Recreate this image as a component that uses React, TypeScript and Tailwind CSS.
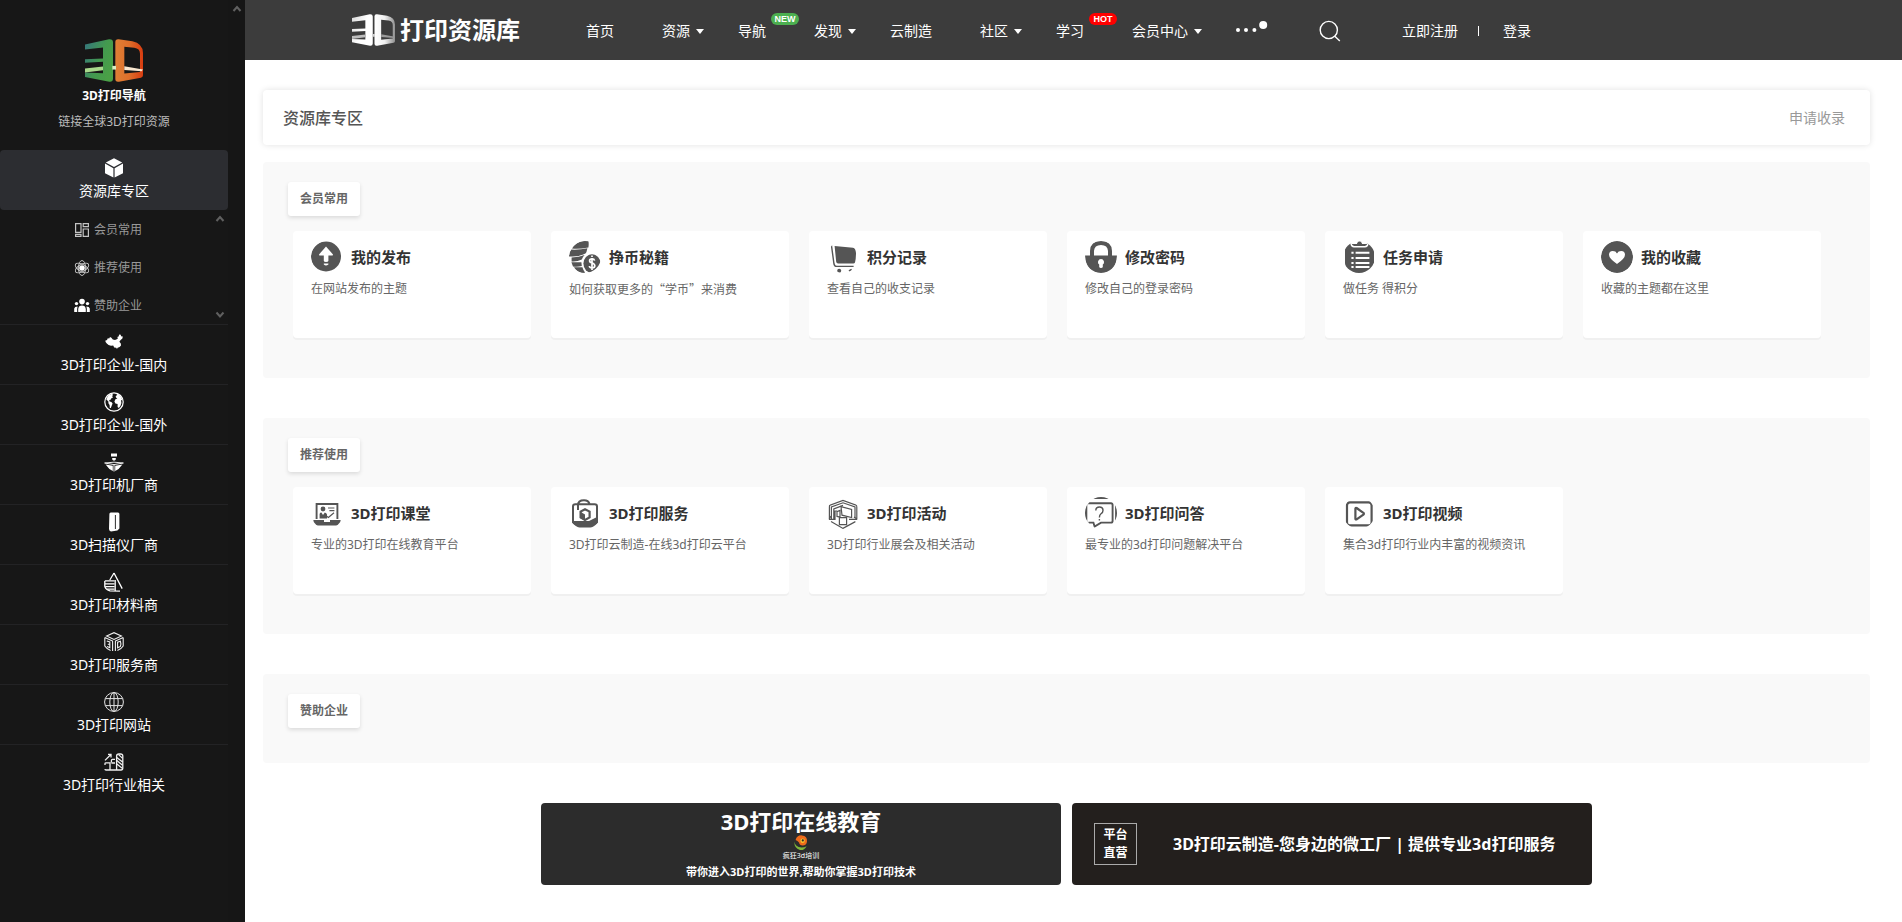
import type { ReactNode } from 'react';

/* ---------- brand mark ---------- */

function Mark({ mono = false, className }: { mono?: boolean; className: string }) {
  const left = mono ? 'markLeftMono' : 'markLeft';
  const right = mono ? 'markRightMono' : 'markRight';
  return (
    <svg viewBox="0 0 174 128" className={className} preserveAspectRatio="none" aria-hidden="true">
      <defs>
        <linearGradient id={left} x1="0" x2="1" y1="0" y2="0.6">
          <stop offset="0" stopColor={mono ? '#d8d8d8' : '#35757f'} />
          <stop offset="0.6" stopColor={mono ? '#ffffff' : '#43994f'} />
          <stop offset="1" stopColor={mono ? '#ffffff' : '#4aa046'} />
        </linearGradient>
        <linearGradient id={right} x1="0" x2="1" y1="0" y2="0">
          <stop offset="0" stopColor={mono ? '#ffffff' : '#df7f35'} />
          <stop offset="0.5" stopColor={mono ? '#f0f0f0' : '#de6f2b'} />
          <stop offset="1" stopColor={mono ? '#8f8f8f' : '#d83c10'} />
        </linearGradient>
      </defs>
      <path
        fill={`url(#${left})`}
        d="M0 16 L72 1 Q84 0 84 10 V118 Q84 128 73 127 L0 113 V100 L54 102 V68 L0 71 V60 L54 58 V25 L0 31 Z"
      />
      <path
        fill={`url(#${right})`}
        fillRule="evenodd"
        d="M91 9 Q91 0 101 1 L142 7 Q174 14 174 42 V108 Q174 114 168 115 L102 127 Q91 129 91 119 Z M118 23 V103 L165 98 V44 Q165 28 148 26 Z"
      />
      <path fill={mono ? '#bdbdbd' : '#a9d98c'} d="M0 88 L54 82 V93 L0 100 Z" />
      <path fill={mono ? '#9a9a9a' : '#f8e6cf'} d="M118 81 L174 91 L170 96 L118 92 Z" />
      <path fill={mono ? '#cfcfcf' : '#d9ecc2'} d="M82 80 H93 V91 H82 Z" />
    </svg>
  );
}

function Chevron({ down = false }: { down?: boolean }) {
  return (
    <svg width="10" height="8" viewBox="0 0 10 8" fill="none" stroke="#606060" strokeWidth="2" aria-hidden="true">
      <path d={down ? 'M1.5 1.5 L5 5.5 L8.5 1.5' : 'M1.5 6 L5 2 L8.5 6'} />
    </svg>
  );
}

/* ---------- sidebar icons ---------- */

function SideSvg({ children }: { children: ReactNode }) {
  return (
    <svg width="20" height="20" viewBox="0 0 20 20" fill="none" stroke="none" aria-hidden="true">
      {children}
    </svg>
  );
}

const cubeIcon = (
  <SideSvg>
    <path fill="#fff" d="M10 0.3 L18.2 4.4 L10 8.9 L1.8 4.4 Z M1 5.6 L9.4 10.2 V19.6 L1 15.2 Z M19 5.6 L10.6 10.2 V19.6 L19 15.2 Z" />
  </SideSvg>
);

const chinaIcon = (
  <SideSvg>
    <path
      fill="#fff"
      d="M1.2 8.8 L3 8 L3.8 6.2 L5.2 6.4 L6 5 L7.4 5.8 L8.8 7.6 L11 8 L12.8 7.2 L14 6.2 L13.2 5 L14.6 4.6 L15.2 2.6 L16.8 2.8 L17 4.2 L18.8 4.6 L18.4 6.6 L17.2 7.6 L16 8.8 L15.4 9.8 L16.8 11.4 L17 13.4 L15.6 15 L13.6 15.8 L13 17 L12.2 15.8 L10.2 15.4 L9.2 13.6 L7 13.8 L4.6 13 L2.8 11.4 L1.8 10.2 Z"
    />
  </SideSvg>
);

const earthIcon = (
  <SideSvg>
    <circle cx="10" cy="10" r="9.2" stroke="#fff" strokeWidth="1.2" />
    <path
      fill="#fff"
      d="M2.2 7.2 L4.2 3.6 L7.8 1.8 L9 2.8 L8.2 4.2 L9 5.4 L7.4 6.2 L6.6 7.8 L5.2 8 L5.6 9.4 L7.4 10 L8.6 11.6 L7.8 13.6 L6.8 16 L5.8 16 L5.6 13 L4.4 11.2 L4.4 9.6 Z M11.6 4.4 L13 3 L12.6 1.8 L15.4 3 L17.4 5.2 L18.4 8.4 L17 8 L17.4 11 L16.4 14 L14.8 16 L13.6 15 L13.6 12 L11.4 11.6 L10.4 9.4 L11.4 7.2 L13.4 6.6 L12.2 5.8 Z"
    />
  </SideSvg>
);

const printerIcon = (
  <SideSvg>
    <path fill="#fff" d="M7 1.6 H13 V4.6 H7 Z M8.2 6 H11.8 V7.4 L10.8 8.6 H9.2 L8.2 7.4 Z M1.6 12.4 L8.8 13.8 V19 L5.4 17 Z M18.4 12.4 L11.2 13.8 V19 L14.6 17 Z M9.5 12.8 H10.5 V19.4 H9.5 Z" />
    <path stroke="#fff" strokeWidth="0.9" d="M0.6 11 L10 10.2 L19.4 11 L10 12.6 Z" />
  </SideSvg>
);

const scannerIcon = (
  <SideSvg>
    <path fill="#fff" d="M5.4 2 Q5.4 0.8 6.8 0.6 H14 Q15.4 0.8 15.4 2 V16.4 L13.4 18.6 L7 19.4 Q5.2 19.2 5 17 Z" />
    <path stroke="#171717" strokeWidth="0.9" d="M11.4 3 V17" />
  </SideSvg>
);

const materialIcon = (
  <SideSvg>
    <path stroke="#fff" strokeWidth="1.3" d="M10 1 L5.8 8 M10 1 L18.2 16.6 M11.2 8 V19 M0.8 9 V14.6 Q2 18 6 18.8 L16 19.2" />
    <path stroke="#fff" strokeWidth="1.3" d="M0.8 8.8 H10.6 M1 11.8 H10.6 M1.2 14.6 H10.6 M3 17.2 H10.6" />
  </SideSvg>
);

const serviceIcon = (
  <SideSvg>
    <g stroke="#f0f0f0" strokeWidth="1.1">
      <path d="M2.6 4 L10 0.7 L17.4 4 L10 7.4 Z" />
      <path d="M0.8 5.6 L8.6 9 V19 M19.2 5.6 L11.4 9 V19 M0.8 5.6 V14 Q2.8 17 6.6 18.6 M19.2 5.6 V14 Q17.2 17 13.4 18.6" />
      <path d="M2.8 9 L5.8 10 V12.4 L3.8 12.2 M5.8 12.6 V15.6 L3 14.6 M13.6 10.2 V15.8 L16.4 14.4 Q17.4 12 16.4 9.2 Z" />
    </g>
  </SideSvg>
);

const webIcon = (
  <SideSvg>
    <g stroke="#e4e4e4" strokeWidth="1">
      <circle cx="10" cy="10" r="9.4" />
      <ellipse cx="10" cy="10" rx="4.2" ry="9.4" />
      <path d="M10 0.6 V19.4 M1.4 6.6 H18.6 M1.4 13.6 H18.6" />
    </g>
  </SideSvg>
);

const industryIcon = (
  <SideSvg>
    <g stroke="#f0f0f0" strokeWidth="1.3">
      <path d="M1 8.4 L6.6 2.8 M4 2.4 H7 V5.4 M1 13 V11.6 Q1 10.8 2 10.8 H6 V18 M7.4 10.4 V8.4 Q7.4 7.4 8.4 7.4 H11 M1 17 Q1 18 2 18 H17 Q18.8 18 18.8 16 V4 Q18.8 2 16.6 2 H15 Q12.6 2 12.6 4 V18" />
      <path d="M12.8 5.4 L18.6 10 M12.8 8.6 L18.6 13.2 M12.8 12 L18.6 16.6 M14.6 2.6 L18.6 6.4 M7.4 11 H11" />
    </g>
  </SideSvg>
);

function SubSvg({ children }: { children: ReactNode }) {
  return (
    <svg width="16" height="16" viewBox="0 0 16 16" fill="none" aria-hidden="true">
      {children}
    </svg>
  );
}

const boardIcon = (
  <SubSvg>
    <path stroke="#c4c4c4" strokeWidth="1.2" d="M1.6 1.6 H7 V10.4 H1.6 Z M1.6 12.4 H7 V14.4 H1.6 Z M9.2 1.6 H14.4 V4.6 H9.2 Z M9.2 7 H14.4 V14.4 H9.2 Z" />
  </SubSvg>
);

const atomIcon = (
  <SubSvg>
    <g stroke="#cfcfcf" strokeWidth="0.9">
      <ellipse cx="8" cy="8" rx="7.5" ry="3.6" transform="rotate(30 8 8)" />
      <ellipse cx="8" cy="8" rx="7.5" ry="3.6" transform="rotate(90 8 8)" />
      <ellipse cx="8" cy="8" rx="7.5" ry="3.6" transform="rotate(150 8 8)" />
    </g>
    <circle cx="8" cy="8" r="2.8" fill="#fff" />
  </SubSvg>
);

const peopleIcon = (
  <SubSvg>
    <g fill="#fff">
      <circle cx="8" cy="3.6" r="2.8" />
      <circle cx="2.5" cy="5.6" r="1.7" />
      <circle cx="13.5" cy="5.6" r="1.7" />
      <path d="M4.2 14 V11 Q4.6 7.6 8 7.6 Q11.4 7.6 11.8 11 V14 Z M0.2 14 V10.6 Q0.6 8.4 3.6 8.4 Q3 10 3.2 14 Z M15.8 14 V10.6 Q15.4 8.4 12.4 8.4 Q13 10 12.8 14 Z" />
    </g>
  </SubSvg>
);

/* ---------- card icons ---------- */

function CardSvg({ children }: { children: ReactNode }) {
  return (
    <svg
      viewBox="0 0 32 32"
      fill="none"
      className="size-8 shrink-0 rounded-full text-[#555]"
      aria-hidden="true"
    >
      {children}
    </svg>
  );
}

const uploadIcon = (
  <CardSvg>
    <circle cx="15" cy="15.5" r="15" fill="currentColor" />
    <path fill="#fff" d="M15 5.4 L22 13.4 Q22 14.6 20.6 14.6 H17.4 V20 Q17 21 15 21 Q13 21 12.8 20 V14.6 H9.4 Q8 14.6 8 13.4 Z M12.8 22.4 H17.4 V23.6 Q16 24.6 15 24.6 Q14 24.6 12.8 23.6 Z" />
  </CardSvg>
);

const coinsIcon = (
  <CardSvg>
    <path
      fill="currentColor"
      d="M3 7.6 Q8 -1 19.4 0 Q20 3 19.4 6.4 Q10 8.4 3 7.6 Z M0 15.4 Q0 11 2.4 8.6 Q11 9 18.4 7.2 L17.6 10.6 Q17.4 11.8 16.4 12.4 Q9 16.4 0 15.4 Z M2.6 16.4 Q10 16.4 15.6 14 Q13.6 16 12.8 18.6 Q8 20.8 2.6 20.4 Z M2.4 21.2 H12.4 L12.8 25 Q8 26 4 25.4 Z M5 26.2 H13.4 Q14.4 29.6 16 31.4 Q15 32.6 12 32 Q8 31 5 26.2 Z"
    />
    <ellipse cx="23" cy="22.6" rx="8.6" ry="9.4" fill="currentColor" />
    <path stroke="#fff" strokeWidth="1.7" d="M25.6 19.6 Q25.2 17.8 23 17.8 Q20.6 17.8 20.6 19.8 Q20.6 21.4 23 22 Q25.8 22.8 25.8 24.8 Q25.8 27 23 27 Q20.6 27 20.4 25 M23 14.4 V16 M23 17 V29" />
  </CardSvg>
);

const cartIcon = (
  <CardSvg>
    <path fill="currentColor" d="M7.6 5 L26 6.8 Q28.6 7.4 29 12 Q29 18 28 21.4 Q27.4 22.6 26 22.4 H11 Q9.6 22.4 9.2 21 Z" />
    <path stroke="currentColor" strokeWidth="1.4" d="M4.4 4 L7 23 Q7.6 25.4 9.6 25.4 H26.6" />
    <circle cx="12.2" cy="29.8" r="2" fill="currentColor" />
    <path stroke="currentColor" strokeWidth="1.6" d="M22 30 L24.6 28.4" />
  </CardSvg>
);

const lockIcon = (
  <CardSvg>
    <path stroke="currentColor" strokeWidth="4" d="M7 15 V10 Q7.4 2 16 2 Q24.6 2 25 10 V15" />
    <path fill="currentColor" d="M0 14.4 H32 Q31 32 16 32 Q1 32 0 14.4 Z" />
    <path fill="#fff" d="M16 18 A3.1 3.1 0 0 1 17.8 23.6 V26 Q17.4 27 16 27 Q14.6 27 14.2 26 V23.6 A3.1 3.1 0 0 1 16 18 Z" />
  </CardSvg>
);

const taskIcon = (
  <CardSvg>
    <path fill="currentColor" d="M6 2.6 H27 Q31 5 31 10 V22 Q31 32 21 32 H12 Q2 32 2 22 V10 Q2 5 6 2.6 Z" />
    <path fill="currentColor" stroke="#fff" strokeWidth="1.4" d="M8 2.4 H13.4 Q14 0 16.5 -0.4 Q19 0 19.6 2.4 H25 Q24.6 5.8 22 5.8 H11 Q8.4 5.8 8 2.4 Z" />
    <path stroke="#fff" strokeWidth="2" d="M8.4 11.8 H10.6 M12.6 11.8 H26.4 M8.4 17 H10.6 M12.6 17 H26.4 M8.4 22 H10.6 M12.6 22 H26.4 M8.4 26 H10.6 M12.6 26 H26.4" />
  </CardSvg>
);

const heartIcon = (
  <CardSvg>
    <circle cx="16" cy="16" r="16" fill="currentColor" />
    <path fill="#fff" d="M16 23 Q8 17.6 8 13.8 Q8 10 11.8 10 Q14.8 10 16 12.4 Q17.2 10 20.2 10 Q24 10 24 13.8 Q24 17.6 16 23 Z" />
  </CardSvg>
);

const courseIcon = (
  <CardSvg>
    <path stroke="currentColor" strokeWidth="1.9" d="M5.6 22 V7 H26.4 V22" />
    <path fill="currentColor" d="M2.4 23 H13 V25 H19 V23 H29.6 V25 Q28.6 28.4 26 28.4 H6 Q3.4 28.4 2.4 25 Z" />
    <circle cx="12" cy="12" r="2.4" fill="currentColor" />
    <path fill="currentColor" d="M8.6 21.4 V17 Q9 15.6 10.4 15.6 L12 18 L13.8 15.6 Q15.6 16 16 17.6 V21.4 Z" />
    <path stroke="currentColor" strokeWidth="1.2" d="M17 11 H23.4 M18.4 13.6 H23.4 M14 18 L17.4 20.4 L23 15.8" />
  </CardSvg>
);

const bagIcon = (
  <CardSvg>
    <path stroke="currentColor" strokeWidth="2" d="M4 27 V9.4 Q4 7.2 6.4 7.2 H25.6 Q28 7.2 28 9.4 V27 M9 13 V8 Q9 3.2 15 3.2 Q19.4 3.2 20.6 7" />
    <path fill="currentColor" d="M3 24 H20 L29 19.6 V26 Q28.6 30.4 25 30.4 H7 Q3.4 30.4 3 26.4 Z" />
    <path fill="#fff" stroke="currentColor" strokeWidth="2.2" d="M16 12.2 L20.6 14.6 V20.4 L16 23 L11.6 20.4 V14.6 Z" />
    <path fill="currentColor" d="M11 14.6 L16 17.4 V23.6 L11 21 Z" />
  </CardSvg>
);

const eventIcon = (
  <CardSvg>
    <g stroke="currentColor" strokeWidth="1.2">
      <path d="M4 19 L2.4 22 V8.4 L16 3.4 L29.8 8.4 V22 L27 20" />
      <path d="M4.4 22 V10 L16 5.8 L28 10 V21 M6.8 22.4 V12 L16 8.4 M1.8 22.4 H8 V14 H10" />
      <path d="M14 9.6 L24.6 12.4 V20.6 L15 18.2 Z M10 14.6 L13 13.4 V20 L10 19.4 Z" />
      <path d="M12.4 20.6 H19.6 V27.6 H12.4 Z M4 24.6 L16 31.4 L28.4 24.6 M22 22.4 H30" />
    </g>
  </CardSvg>
);

const questionIcon = (
  <CardSvg>
    <path stroke="currentColor" strokeWidth="2.6" d="M0.6 0.6 H31.4 V28" />
    <path stroke="currentColor" strokeWidth="1.9" d="M2 6.2 H26 Q27.6 6.2 27.6 8 V24 Q27.6 25.6 26 25.6 H16 L9.6 29.6 L8.4 25.6 H3.4" />
    <path stroke="currentColor" strokeWidth="2.6" d="M1 6 V26" />
    <path stroke="currentColor" strokeWidth="1.4" d="M10.8 13.6 Q10.8 10 14.4 10 Q18 10 18 13.4 Q18 15.4 16 16.8 Q14.4 18 14.4 20.4 M14.4 22 V23.6" />
  </CardSvg>
);

const videoIcon = (
  <CardSvg>
    <rect x="4" y="5.4" width="24.6" height="23" rx="3" stroke="currentColor" strokeWidth="2.2" />
    <path stroke="currentColor" strokeWidth="2.2" strokeLinejoin="round" d="M12.4 11.6 Q12.4 10.6 13.6 11 L20.4 15.8 Q21.4 16.8 20.4 17.6 L13.6 22.4 Q12.4 22.8 12.4 21.8 Z" />
  </CardSvg>
);

/* ---------- data ---------- */

const subItems = [
  { label: '会员常用', icon: boardIcon },
  { label: '推荐使用', icon: atomIcon },
  { label: '赞助企业', icon: peopleIcon },
];

const sideItems = [
  { label: '3D打印企业-国内', icon: chinaIcon },
  { label: '3D打印企业-国外', icon: earthIcon },
  { label: '3D打印机厂商', icon: printerIcon },
  { label: '3D扫描仪厂商', icon: scannerIcon },
  { label: '3D打印材料商', icon: materialIcon },
  { label: '3D打印服务商', icon: serviceIcon },
  { label: '3D打印网站', icon: webIcon },
  { label: '3D打印行业相关', icon: industryIcon },
];

type NavItem = { label: string; caret?: boolean; badge?: 'NEW' | 'HOT' };

const navItems: NavItem[] = [
  { label: '首页' },
  { label: '资源', caret: true },
  { label: '导航', badge: 'NEW' },
  { label: '发现', caret: true },
  { label: '云制造' },
  { label: '社区', caret: true },
  { label: '学习', badge: 'HOT' },
  { label: '会员中心', caret: true },
];

type Card = { title: string; text: ReactNode; icon: ReactNode };

const coinText = (
  <span className="font-['Noto_Sans_CJK_SC',sans-serif]">如何获取更多的“学币”来消费</span>
);

const memberCards: Card[] = [
  { title: '我的发布', text: '在网站发布的主题', icon: uploadIcon },
  { title: '挣币秘籍', text: coinText, icon: coinsIcon },
  { title: '积分记录', text: '查看自己的收支记录', icon: cartIcon },
  { title: '修改密码', text: '修改自己的登录密码', icon: lockIcon },
  { title: '任务申请', text: '做任务 得积分', icon: taskIcon },
  { title: '我的收藏', text: '收藏的主题都在这里', icon: heartIcon },
];

const recommendedCards: Card[] = [
  { title: '3D打印课堂', text: '专业的3D打印在线教育平台', icon: courseIcon },
  { title: '3D打印服务', text: '3D打印云制造-在线3d打印云平台', icon: bagIcon },
  { title: '3D打印活动', text: '3D打印行业展会及相关活动', icon: eventIcon },
  { title: '3D打印问答', text: '最专业的3d打印问题解决平台', icon: questionIcon },
  { title: '3D打印视频', text: '集合3d打印行业内丰富的视频资讯', icon: videoIcon },
];

/* ---------- page parts ---------- */

function Sidebar() {
  return (
    <aside className="flex w-[245px] shrink-0 bg-[#171717]">
      <div className="w-[228px]">
        <div className="flex h-[150px] flex-col items-center pt-[39px]">
          <Mark className="h-[43px] w-[58px]" />
          <p className="mt-[5px] text-xs leading-[18px] font-bold text-white">3D打印导航</p>
          <p className="mt-2 text-xs leading-[18px] text-[#bbb]">链接全球3D打印资源</p>
        </div>
        <nav aria-label="分类">
          <a href="#library" className="flex h-[60px] flex-col items-center rounded bg-[#2c2d31] pt-2 text-sm leading-[26px] text-white">
            {cubeIcon}
            资源库专区
          </a>
          <div className="flex">
            <ul className="flex-1">
              {subItems.map((item) => (
                <li key={item.label}>
                  <a href="#library" className="flex h-[38px] items-center gap-1 pt-0.5 pl-[74px] text-xs text-[#999]">
                    {item.icon}
                    {item.label}
                  </a>
                </li>
              ))}
            </ul>
            <div className="flex w-[17px] flex-col items-center justify-between py-[5px]">
              <Chevron />
              <Chevron down />
            </div>
          </div>
          <ul>
            {sideItems.map((item) => (
              <li key={item.label}>
                <a href="#library" className="flex h-[60px] flex-col items-center border-t border-[#232325] pt-[7px] text-sm leading-[26px] text-white">
                  {item.icon}
                  {item.label}
                </a>
              </li>
            ))}
          </ul>
        </nav>
      </div>
      <div className="flex flex-1 justify-center bg-[#161616] pt-[5px]">
        <Chevron />
      </div>
    </aside>
  );
}

function Header() {
  return (
    <header className="flex h-[60px] items-center bg-[#3c3c3c] pl-[107px] text-sm text-white">
      <a href="#home" className="flex shrink-0 items-center gap-[5px]">
        <Mark mono className="h-8 w-[43px]" />
        <span className="text-2xl leading-8 font-bold">打印资源库</span>
      </a>
      <nav aria-label="主导航" className="ml-[66px] flex shrink-0 items-center gap-[34px] pt-0.5">
        {navItems.map((item) => (
          <a key={item.label} href="#home" className="relative flex items-center gap-[6px]">
            {item.label}
            <svg width="8" height="5" viewBox="0 0 8 5" aria-hidden="true">
              {item.caret && <path fill="#fff" d="M0 0 H8 L4 5 Z" />}
            </svg>
            {item.badge === 'NEW' && (
              <span className="absolute -top-2 left-[33px] h-3 w-7 rounded-full bg-[#4caf50] text-center font-['Liberation_Sans',sans-serif] text-[9px] leading-3 font-bold">
                NEW
              </span>
            )}
            {item.badge === 'HOT' && (
              <span className="absolute -top-2 left-[33px] h-3 w-7 rounded-full bg-[#f00] text-center font-['Liberation_Sans',sans-serif] text-[9px] leading-3 font-bold">
                HOT
              </span>
            )}
          </a>
        ))}
        <button type="button" aria-label="更多">
          <svg width="32" height="20" viewBox="0 0 32 20" fill="#fff" aria-hidden="true">
            <circle cx="2" cy="9" r="2" />
            <circle cx="10" cy="9" r="2" />
            <circle cx="18.4" cy="9" r="2" />
            <circle cx="27.2" cy="4" r="4" />
          </svg>
        </button>
      </nav>
      <button type="button" aria-label="搜索" className="ml-[51px] shrink-0 pt-0.5">
        <svg width="22" height="22" viewBox="0 0 22 22" fill="none" stroke="#fff" strokeWidth="1.4" aria-hidden="true">
          <circle cx="9.8" cy="10" r="8.6" />
          <path d="M15.8 16.2 L20.8 21" />
        </svg>
      </button>
      <div className="ml-[61px] flex shrink-0 items-center pt-0.5">
        <a href="#register">立即注册</a>
        <span className="mr-6 ml-5 h-[10px] w-px bg-white" />
        <a href="#login">登录</a>
      </div>
    </header>
  );
}

function Section({ title, cards }: { title: string; cards: Card[] }) {
  return (
    <section className="mb-10 rounded bg-[#f9f9f9] pt-5 pr-[49px] pb-5 pl-[31px]">
      <h2 className="-ml-[6px] w-fit rounded-[3px] bg-white px-3 text-xs leading-[34px] font-bold text-[#666] shadow-[0_2px_4px_rgba(0,0,0,0.12)]">
        {title}
      </h2>
      <div className="mt-[15px] -ml-px grid grid-cols-6 gap-x-5">
        {cards.map((card) => (
          <a
            key={card.title}
            href="#library"
            className="mb-5 h-[107px] min-w-0 rounded bg-white px-[18px] pt-[10px] shadow-[0_2px_0_#f0f0f0]"
          >
            <span className="flex items-center gap-2">
              {card.icon}
              <strong className="text-[15px] leading-5 font-bold text-[#333]">{card.title}</strong>
            </span>
            <span className="mt-[6px] block text-xs leading-5 text-[#666]">{card.text}</span>
          </a>
        ))}
      </div>
    </section>
  );
}

function Banners() {
  return (
    <div className="flex justify-center gap-[11px]">
      <a href="#course" className="flex h-[82px] w-[520px] flex-col items-center rounded bg-[#2c2c2c] pt-[6px] text-white">
        <span className="text-[22px] leading-6 font-bold">3D打印在线教育</span>
        <svg width="16" height="16" viewBox="0 0 16 16" className="mt-[2px]" aria-hidden="true">
          <path fill="#ee6a1b" d="M2.6 5 Q4 0 9 0.4 Q14.4 1 14 6.4 Q13.6 10.4 9.6 10.6 Q6.6 10.4 6 7.6 Q4.6 5.6 2.6 5 Z" />
          <circle cx="9.6" cy="5.8" r="2.2" fill="#f6c12d" />
          <circle cx="9.8" cy="5.4" r="1.1" fill="#2c2c2c" />
          <path fill="#7fb53a" d="M1.4 6.6 Q2 12 8.6 12.6 Q11.6 12.6 13.6 11.2 Q11 15.6 7 15 Q1 13.4 1.4 6.6 Z" />
        </svg>
        <span className="text-[7px] leading-[10px]">疯狂3d培训</span>
        <span className="mt-1 text-[11px] leading-[14px] font-bold">带你进入3D打印的世界,帮助你掌握3D打印技术</span>
      </a>
      <a href="#cloud" className="flex h-[82px] w-[520px] items-center rounded bg-[#231f1d] pl-[22px] font-bold text-white">
        <span className="flex h-[42px] w-[43px] flex-col items-center justify-center border border-[#aaa] text-xs leading-[18px]">
          <span>平台</span>
          <span>直营</span>
        </span>
        <span className="ml-9 text-base">3D打印云制造-您身边的微工厂 | 提供专业3d打印服务</span>
      </a>
    </div>
  );
}

export default function App() {
  return (
    <div className="flex min-h-screen bg-white font-['Noto_Sans','Noto_Sans_CJK_SC',sans-serif]" lang="zh-CN">
      <Sidebar />
      <div className="min-w-0 flex-1">
        <Header />
        <main className="pt-[30px] pr-8 pl-[18px]">
          <div className="mb-[17px] flex h-[55px] items-center justify-between rounded bg-white px-5 shadow-[0_0_6px_rgba(0,0,0,0.12)]">
            <h1 className="text-base font-medium text-[#555]">资源库专区</h1>
            <a href="#apply" className="pr-[5px] text-sm text-[#999]">申请收录</a>
          </div>
          <Section title="会员常用" cards={memberCards} />
          <Section title="推荐使用" cards={recommendedCards} />
          <Section title="赞助企业" cards={[]} />
          <Banners />
        </main>
      </div>
    </div>
  );
}
